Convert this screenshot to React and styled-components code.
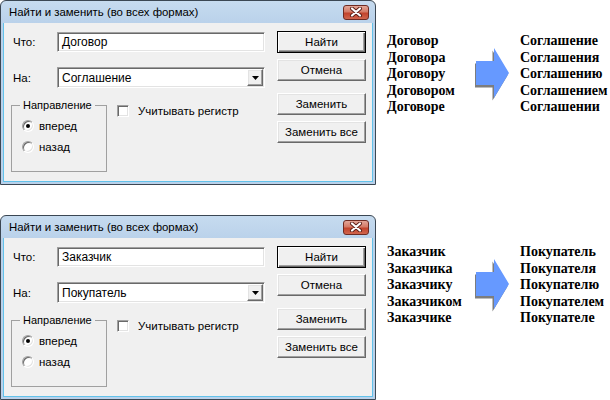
import styled, { createGlobalStyle } from 'styled-components';

const GlobalStyle = createGlobalStyle`
  body {
    margin: 0;
    background: #ffffff;
    font-family: "Liberation Sans", Arial, sans-serif;
  }
`;

const Page = styled.div`
  display: flex;
  flex-direction: column;
  gap: 30px;
  width: 610px;
`;

const Row = styled.div`
  display: flex;
  align-items: flex-start;
`;

const Win = styled.div`
  width: 376px;
  height: 185px;
  box-sizing: border-box;
  border: 1px solid #3b4753;
  border-radius: 6px 6px 0 0;
  background: linear-gradient(#c6dbef, #b9d1ea 24px, #b9d1ea);
  padding: 0 2px 2px;
  display: flex;
  flex-direction: column;
`;

const TitleBar = styled.div`
  height: 22px;
  display: flex;
  align-items: center;
  justify-content: space-between;
  padding: 0 4px 0 6px;
`;

const Title = styled.span`
  font-size: 11.4px;
  color: #000;
`;

const Close = styled.div`
  width: 26px;
  height: 15px;
  box-sizing: border-box;
  border: 1px solid #6e2b22;
  border-radius: 3px;
  background: linear-gradient(#e3a698, #d47a66 45%, #c2432c 55%, #d0654d);
  display: flex;
  align-items: center;
  justify-content: center;
`;

const Client = styled.div`
  flex: 1;
  background: #f0f0f0;
  border: 1px solid #62c2ea;
  border-top: 0;
  display: flex;
  padding: 8px 0 0 9px;
  font-size: 11.5px;
  color: #000;
`;

const Fields = styled.div`
  width: 252px;
  display: flex;
  flex-direction: column;
`;

const FieldRow = styled.div`
  display: grid;
  grid-template-columns: 44px 208px;
  align-items: center;
  margin-top: ${(p) => p.$top}px;
`;

const Label = styled.span`
  font-size: 11.5px;
`;

const sunken = `
  box-sizing: border-box;
  border: 1px solid;
  border-color: #a0a0a0 #ffffff #ffffff #a0a0a0;
  box-shadow: inset 1px 1px #696969, inset -1px -1px #e3e3e3;
  background: #ffffff;
`;

const raised = `
  box-sizing: border-box;
  border: 1px solid;
  border-color: #ffffff #696969 #696969 #ffffff;
  box-shadow: inset -1px -1px #a0a0a0, inset 1px 1px #e3e3e3;
  background: #f0f0f0;
`;

const TextBox = styled.div`
  ${sunken}
  height: 20px;
  padding-left: 4px;
  display: flex;
  align-items: center;
  font-size: 12px;
`;

const Combo = styled.div`
  ${sunken}
  height: 21px;
  padding: 0 1px 0 4px;
  display: flex;
  align-items: center;
  justify-content: space-between;
  font-size: 12px;
`;

const DropBtn = styled.div`
  ${raised}
  width: 16px;
  height: 17px;
  display: flex;
  align-items: center;
  justify-content: center;
`;

const Lower = styled.div`
  display: flex;
  align-items: flex-start;
  margin: 11px 0 0 -2px;
`;

const Group = styled.fieldset`
  width: 96px;
  box-sizing: border-box;
  margin: 0;
  min-width: 0;
  border: 1px solid #a0a0a0;
  padding: 0 0 18px 10px;
`;

const Legend = styled.legend`
  padding: 0 3px;
  margin-left: -2px;
  font-size: 11px;
  line-height: 13px;
`;

const RadioRow = styled.label`
  display: flex;
  align-items: center;
  gap: 5px;
  height: 13px;
  margin-top: ${(p) => p.$top}px;
  font-size: 11.5px;
`;

const RadioDot = styled.span`
  width: 12px;
  height: 12px;
  box-sizing: border-box;
  border-radius: 50%;
  border: 1px solid;
  border-color: #a0a0a0 #ffffff #ffffff #a0a0a0;
  box-shadow: inset 1px 1px #696969, inset -1px -1px #e3e3e3;
  background: #fff;
  display: flex;
  align-items: center;
  justify-content: center;

  &::after {
    content: '';
    width: 4px;
    height: 4px;
    border-radius: 50%;
    background: ${(p) => (p.$on ? '#000' : 'transparent')};
  }
`;

const CheckRow = styled.label`
  display: flex;
  align-items: center;
  gap: 9px;
  margin: 6px 0 0 10px;
  font-size: 11.5px;
`;

const CheckBox = styled.span`
  ${sunken}
  width: 12px;
  height: 12px;
`;

const Buttons = styled.div`
  display: flex;
  flex-direction: column;
  margin-left: 12px;
`;

const Button = styled.div`
  ${raised}
  width: 89px;
  height: 22px;
  margin-top: ${(p) => p.$top}px;
  display: flex;
  align-items: center;
  justify-content: center;
  font-size: 11.5px;
  ${(p) =>
    p.$default &&
    `
    border-color: #000;
    box-shadow: inset 1px 1px #ffffff, inset -1px -1px #696969, inset -2px -2px #a0a0a0;
  `}
`;

const Words = styled.div`
  display: grid;
  grid-template-columns: 88px 45px auto;
  align-items: center;
  margin-left: 11px;
  padding-top: ${(p) => p.$top}px;
`;

const WordList = styled.div`
  display: flex;
  flex-direction: column;
  font-family: "Liberation Serif", "Times New Roman", serif;
  font-weight: bold;
  font-size: 14px;
  line-height: 16.5px;
  color: #000;
`;

function CloseIcon() {
  return (
    <svg width="14" height="10" viewBox="0 0 14 10">
      <path d="M3 1.5 L11 8.5 M11 1.5 L3 8.5" stroke="#5a1e16" strokeWidth="4" strokeLinecap="round" />
      <path d="M3 1.5 L11 8.5 M11 1.5 L3 8.5" stroke="#ffffff" strokeWidth="2.2" strokeLinecap="round" />
    </svg>
  );
}

function Arrow() {
  const shape = 'M0 13 H18 V0 L33 25 L18 50 V37 H0 Z';
  return (
    <svg width="36" height="53" viewBox="0 0 36 53">
      <path d={shape} transform="translate(-0.5 2.5)" fill="#7d7d7d" />
      <path d={shape} transform="translate(1 0)" fill="#6699ff" />
    </svg>
  );
}

function Dialog({ what, to }) {
  return (
    <Win>
      <TitleBar>
        <Title>Найти и заменить (во всех формах)</Title>
        <Close>
          <CloseIcon />
        </Close>
      </TitleBar>
      <Client>
        <Fields>
          <FieldRow $top={1}>
            <Label>Что:</Label>
            <TextBox>{what}</TextBox>
          </FieldRow>
          <FieldRow $top={15}>
            <Label>На:</Label>
            <Combo>
              {to}
              <DropBtn>
                <svg width="7" height="4" viewBox="0 0 7 4">
                  <path d="M0 0 H7 L3.5 4 Z" fill="#000" />
                </svg>
              </DropBtn>
            </Combo>
          </FieldRow>
          <Lower>
            <Group>
              <Legend>Направление</Legend>
              <RadioRow $top={7}>
                <RadioDot $on />
                вперед
              </RadioRow>
              <RadioRow $top={8}>
                <RadioDot />
                назад
              </RadioRow>
            </Group>
            <CheckRow>
              <CheckBox />
              Учитывать регистр
            </CheckRow>
          </Lower>
        </Fields>
        <Buttons>
          <Button $default $top={0}>Найти</Button>
          <Button $top={6}>Отмена</Button>
          <Button $top={12}>Заменить</Button>
          <Button $top={6}>Заменить все</Button>
        </Buttons>
      </Client>
    </Win>
  );
}

const examples = [
  {
    what: 'Договор',
    to: 'Соглашение',
    top: 33,
    from: ['Договор', 'Договора', 'Договору', 'Договором', 'Договоре'],
    into: ['Соглашение', 'Соглашения', 'Соглашению', 'Соглашением', 'Соглашении'],
  },
  {
    what: 'Заказчик',
    to: 'Покупатель',
    top: 29,
    from: ['Заказчик', 'Заказчика', 'Заказчику', 'Заказчиком', 'Заказчике'],
    into: ['Покупатель', 'Покупателя', 'Покупателю', 'Покупателем', 'Покупателе'],
  },
];

export default function App() {
  return (
    <>
      <GlobalStyle />
      <Page>
        {examples.map((ex) => (
          <Row key={ex.what}>
            <Dialog what={ex.what} to={ex.to} />
            <Words $top={ex.top}>
              <WordList>
                {ex.from.map((w) => (
                  <span key={w}>{w}</span>
                ))}
              </WordList>
              <Arrow />
              <WordList>
                {ex.into.map((w) => (
                  <span key={w}>{w}</span>
                ))}
              </WordList>
            </Words>
          </Row>
        ))}
      </Page>
    </>
  );
}
